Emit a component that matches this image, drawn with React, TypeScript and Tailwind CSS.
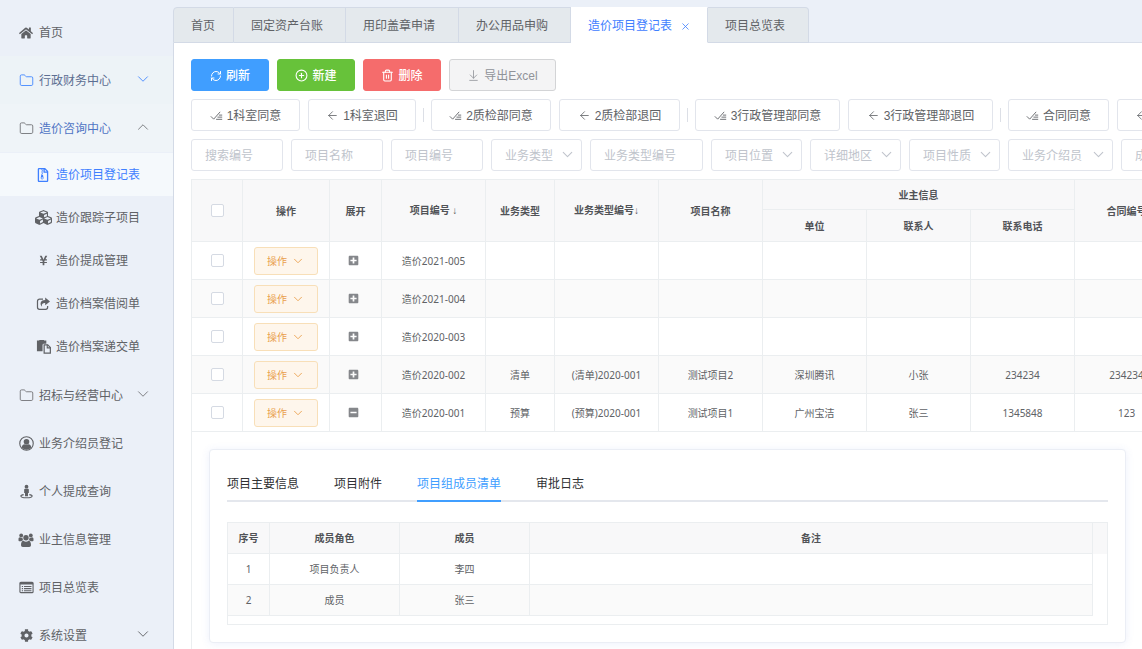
import { useState } from "react";
import type { ReactNode } from "react";
import clsx from "clsx";
import {
  ArrowDownToLine,
  ArrowLeft,
  ChevronDown,
  ChevronUp,
  CirclePlus,
  Folder,
  RefreshCw,
  Trash2,
  X,
} from "lucide-react";
import {
  FaCog,
  FaCubes,
  FaHome,
  FaMinusSquare,
  FaPlusSquare,
  FaRegFileArchive,
  FaYenSign,
} from "react-icons/fa";

const folderIcon = <Folder className="size-[15px]" strokeWidth={1.5} />;

function ShareIcon() {
  return (
    <svg viewBox="0 0 16 16" className="size-[14px]" fill="none">
      <path d="M8 2.500H4A2.300 2.300 0 0 0 1.700 4.800v7A2.300 2.300 0 0 0 4 14.100h7a2.300 2.300 0 0 0 2.300-2.300v-1.500" stroke="currentColor" strokeWidth="1.400" />
      <path d="M10.500 0.500l5.500 4.500-5.500 4.500V6.800C7.500 6.800 6 8 7 11.200 3.500 7.500 5.500 3.300 10.500 3.300z" fill="currentColor" />
    </svg>
  );
}

function PasteIcon() {
  return (
    <svg viewBox="0 0 16 16" className="size-[15px]" fill="currentColor">
      <path d="M1 1.500h2.500V1h5v.5H11V5H8.500A1.500 1.500 0 0 0 7 6.500V13H1z" />
      <path d="M8.700 6.200h3.800l2.800 2.800v6H8.700z" fill="none" stroke="currentColor" strokeWidth="1.300" />
      <path d="M12 6v3.500h3.500" fill="none" stroke="currentColor" strokeWidth="1.200" />
    </svg>
  );
}

function UserCircleIcon() {
  return (
    <svg viewBox="0 0 16 16" className="size-[15px]" fill="currentColor">
      <circle cx="8" cy="8" r="7.200" fill="none" stroke="currentColor" strokeWidth="1.200" />
      <circle cx="8" cy="6.200" r="3" />
      <path d="M2.800 12.300C3.300 10 4.500 8.800 5.900 8.800a3.300 3.300 0 0 0 4.200 0c1.400 0 2.600 1.200 3.100 3.500A6.600 6.600 0 0 1 8 14.600a6.600 6.600 0 0 1-5.200-2.300z" />
    </svg>
  );
}

function StreetViewIcon() {
  return (
    <svg viewBox="0 0 16 16" className="size-[15px]" fill="currentColor">
      <circle cx="8" cy="2.800" r="2" />
      <path d="M6.500 5h3a1 1 0 0 1 1 1v3.500h-.9V13H6.400V9.500h-.9V6a1 1 0 0 1 1-1z" />
      <path d="M5 11.300c-2 .3-3 .8-3 1.500 0 1 2.500 1.900 6 1.900s6-.9 6-1.900c0-.7-1-1.200-3-1.500" fill="none" stroke="currentColor" strokeWidth="1.200" />
    </svg>
  );
}

function UsersIcon() {
  return (
    <svg viewBox="0 0 16 16" className="size-4" fill="currentColor">
      <circle cx="3.200" cy="3.400" r="1.900" />
      <circle cx="12.800" cy="3.400" r="1.900" />
      <circle cx="8" cy="5.800" r="2.700" />
      <path d="M0.500 8.600V7.200c0-1.200.6-1.900 1.500-1.900.8.500 1.600.5 2.500.1 0 1.200.2 2 .9 2.900-.9 0-1.600.3-2.100.9H1.300a.8.8 0 0 1-.8-.6zM15.500 8.600V7.200c0-1.200-.6-1.900-1.500-1.900-.8.500-1.600.5-2.500.1 0 1.200-.2 2-.9 2.900.9 0 1.600.3 2.100.9h2a.8.8 0 0 0 .8-.6z" />
      <path d="M3 13c0-2.600.8-4.200 2.500-4.200a3.900 3.900 0 0 0 5 0C12.200 8.800 13 10.400 13 13c0 1.200-.7 1.900-1.800 1.900H4.800C3.700 14.900 3 14.200 3 13z" />
    </svg>
  );
}

function ListIcon() {
  return (
    <svg viewBox="0 0 16 16" className="size-[15px]" fill="currentColor">
      <rect x="1" y="2.500" width="14" height="11" rx="1" fill="none" stroke="currentColor" strokeWidth="1.200" />
      <path d="M1 2.500h14v2.300H1zM3 6.300h1.300v1.200H3zM3 8.600h1.300v1.200H3zM3 10.900h1.300v1.200H3zM5.300 6.300h8v1.200h-8zM5.300 8.600h8v1.200h-8zM5.300 10.900h8v1.200h-8z" />
    </svg>
  );
}

function FinishedIcon() {
  return (
    <svg viewBox="0 0 16 16" className="size-[13px]" fill="none" stroke="currentColor" strokeWidth="1.100">
      <path d="M1 9l3.500 3.500L12.500 3.500M11 7.500h4M9.200 10h5.800M7.500 12.700H15" />
    </svg>
  );
}

type NavItem = {
  label: string;
  icon: ReactNode;
  arrow?: "up" | "down";
  className?: string;
  iconClass?: string;
};

const topItems: NavItem[] = [
  { label: "首页", icon: <FaHome className="size-[14px]" /> },
  {
    label: "行政财务中心",
    icon: folderIcon,
    arrow: "down",
    className: "bg-[#edf3f7] text-[#5c6e92]",
    iconClass: "text-[#4a8cff]",
  },
  {
    label: "造价咨询中心",
    icon: folderIcon,
    arrow: "up",
    className: "bg-[#eff4f8] text-[#4f75c4]",
    iconClass: "text-[#77797d]",
  },
];

const subItems: NavItem[] = [
  { label: "造价项目登记表", icon: <FaRegFileArchive className="size-[14px]" /> },
  { label: "造价跟踪子项目", icon: <FaCubes className="size-[17px]" /> },
  { label: "造价提成管理", icon: <FaYenSign className="size-[11px]" /> },
  { label: "造价档案借阅单", icon: <ShareIcon /> },
  { label: "造价档案递交单", icon: <PasteIcon /> },
];

const bottomItems: NavItem[] = [
  { label: "招标与经营中心", icon: folderIcon, arrow: "down", iconClass: "text-[#77797d]" },
  { label: "业务介绍员登记", icon: <UserCircleIcon /> },
  { label: "个人提成查询", icon: <StreetViewIcon /> },
  { label: "业主信息管理", icon: <UsersIcon /> },
  { label: "项目总览表", icon: <ListIcon /> },
  { label: "系统设置", icon: <FaCog className="size-[13px]" />, arrow: "down" },
];

function NavRow({ item }: { item: NavItem }) {
  const Arrow = item.arrow === "up" ? ChevronUp : ChevronDown;
  return (
    <a
      href="#"
      className={clsx("flex h-12 items-center gap-1.5 pl-[19px] pr-[21px] pt-px", item.className)}
    >
      <span className={clsx("flex w-[14px] shrink-0 justify-center", item.iconClass)}>
        <span className="shrink-0">{item.icon}</span>
      </span>
      <span className="flex-1">{item.label}</span>
      {item.arrow && (
        <Arrow className={clsx("mb-1 size-[18px]", item.iconClass)} strokeWidth={1.25} />
      )}
    </a>
  );
}

function Sidebar() {
  return (
    <nav className="w-[173px] shrink-0 overflow-hidden pt-2">
      {topItems.map((item) => (
        <NavRow key={item.label} item={item} />
      ))}
      <div className="pb-[3px] pt-px">
        {subItems.map((item, i) => (
          <a
            key={item.label}
            href="#"
            className={clsx(
              "flex h-[43px] items-center gap-1.5 pl-9",
              i === 0 && "bg-[#f5f9fc] text-[#3f80ff]"
            )}
          >
            <span className="flex w-[14px] shrink-0 justify-center">
              <span className="shrink-0">{item.icon}</span>
            </span>
            {item.label}
          </a>
        ))}
      </div>
      {bottomItems.map((item) => (
        <NavRow key={item.label} item={item} />
      ))}
    </nav>
  );
}

const pageTabs = [
  { label: "首页", width: "w-[61px]" },
  { label: "固定资产台账", width: "w-[112px]" },
  { label: "用印盖章申请", width: "w-[113px]" },
  { label: "办公用品申购", width: "w-[112px]" },
  { label: "造价项目登记表", width: "w-[137px]", active: true },
  { label: "项目总览表", width: "w-[101px]" },
];

function PageTabs() {
  return (
    <div className="flex pt-[7px]">
      {pageTabs.map((tab, i) => (
        <button
          key={tab.label}
          className={clsx(
            "flex h-9 shrink-0 items-center gap-2 border-y border-r border-x-[#d3dae6] pl-[17px] pt-px",
            tab.width,
            tab.active
              ? "border-y-white bg-white text-[#3f80ff]"
              : "border-y-[#d3dae6] bg-[#e4e9ed] text-[#606266]",
            i === 0 && "rounded-tl border-l",
            i === pageTabs.length - 1 && "rounded-tr"
          )}
        >
          {tab.label}
          {tab.active && <X className="mt-0.5 size-[11px]" strokeWidth={1.75} />}
        </button>
      ))}
      <div className="flex-1 border-b border-[#d9dfea]" />
    </div>
  );
}

const approvalGroups = [
  [
    { label: "1科室同意", width: "w-[109px]" },
    { label: "1科室退回", width: "w-[108px]", back: true },
  ],
  [
    { label: "2质检部同意", width: "w-[120px]" },
    { label: "2质检部退回", width: "w-[121px]", back: true },
  ],
  [
    { label: "3行政管理部同意", width: "w-[145px]" },
    { label: "3行政管理部退回", width: "w-[145px]", back: true },
  ],
  [
    { label: "合同同意", width: "w-[101px]" },
    { label: "合同退回", width: "w-[101px]", back: true },
  ],
];

function Toolbar() {
  const base = "flex h-8 shrink-0 items-center justify-center gap-1 rounded-[3px] border pt-px";
  return (
    <>
      <div className="flex gap-2">
        <button className={clsx(base, "w-[78px] border-[#409eff] bg-[#409eff] font-medium text-white")}>
          <RefreshCw className="size-3" strokeWidth={2} />
          刷新
        </button>
        <button className={clsx(base, "w-[78px] border-[#67c23a] bg-[#67c23a] font-medium text-white")}>
          <CirclePlus className="size-[13px]" strokeWidth={2} />
          新建
        </button>
        <button className={clsx(base, "w-[78px] border-[#f56c6c] bg-[#f56c6c] font-medium text-white")}>
          <Trash2 className="size-[13px]" strokeWidth={2} />
          删除
        </button>
        <button className={clsx(base, "w-[107px] border-[#d3d4d6] bg-[#f4f4f5] text-[#909399]")}>
          <ArrowDownToLine className="size-[13px]" strokeWidth={1.5} />
          导出Excel
        </button>
      </div>
      <div className="flex items-center gap-[7px]">
        {approvalGroups.map((group, i) => (
          <div key={i} className="flex shrink-0 items-center gap-[7px]">
            {i > 0 && <span className="h-3.5 w-px bg-[#dcdfe6]" />}
            <div className="flex gap-2">
              {group.map((b) => (
                <button key={b.label} className={clsx(base, "border-[#e2e5ec] bg-white", b.width)}>
                  {b.back ? <ArrowLeft className="size-[13px]" strokeWidth={1.5} /> : <FinishedIcon />}
                  {b.label}
                </button>
              ))}
            </div>
          </div>
        ))}
      </div>
    </>
  );
}

const filters = [
  { label: "搜索编号", width: "w-[92px]" },
  { label: "项目名称", width: "w-[92px]" },
  { label: "项目编号", width: "w-[92px]" },
  { label: "业务类型", width: "w-[91px]", select: true },
  { label: "业务类型编号", width: "w-[113px]" },
  { label: "项目位置", width: "w-[91px]", select: true },
  { label: "详细地区", width: "w-[91px]", select: true },
  { label: "项目性质", width: "w-[91px]", select: true },
  { label: "业务介绍员", width: "w-[105px]", select: true },
  { label: "成员", width: "w-[91px]", select: true },
];

function Filters() {
  const field =
    "h-8 w-full appearance-none rounded-[3px] border border-[#e2e5ec] bg-white px-[13px] pt-px text-[#c0c4cc] outline-none placeholder:text-[#c0c4cc]";
  return (
    <div className="flex gap-2">
      {filters.map((f) => (
        <div key={f.label} className={clsx("relative shrink-0", f.width)}>
          {f.select ? (
            <>
              <select aria-label={f.label} className={field}>
                <option>{f.label}</option>
              </select>
              <ChevronDown
                className="pointer-events-none absolute right-1.5 top-[7px] size-[17px] text-[#c0c4cc]"
                strokeWidth={1.5}
              />
            </>
          ) : (
            <input type="text" aria-label={f.label} placeholder={f.label} className={field} />
          )}
        </div>
      ))}
    </div>
  );
}

const rows = [
  { code: "造价2021-005" },
  { code: "造价2021-004" },
  { code: "造价2020-003" },
  {
    code: "造价2020-002",
    type: "清单",
    typeCode: "(清单)2020-001",
    name: "测试项目2",
    company: "深圳腾讯",
    contact: "小张",
    phone: "234234",
    contract: "234234",
  },
  {
    code: "造价2020-001",
    type: "预算",
    typeCode: "(预算)2020-001",
    name: "测试项目1",
    company: "广州宝洁",
    contact: "张三",
    phone: "1345848",
    contract: "123",
    expanded: true,
  },
];

const cell = "border-b border-r border-[#ebeef0]";
const checkbox = "block size-[13px] mx-auto appearance-none rounded-[2px] border border-[#d5dae3] bg-white";
const sortArrow = <span className="font-['Liberation_Sans',sans-serif] font-normal">↓</span>;

function ProjectTable() {
  return (
    <table className="w-[987px] table-fixed border-separate border-spacing-0 border-t border-[#ebeef0] text-center">
      <colgroup>
        <col className="w-[51px]" />
        <col className="w-[87px]" />
        <col className="w-[52px]" />
        <col className="w-[104px]" />
        <col className="w-[69px]" />
        <col className="w-[104px]" />
        <col className="w-[104px]" />
        <col className="w-[104px]" />
        <col className="w-[104px]" />
        <col className="w-[104px]" />
        <col className="w-[104px]" />
      </colgroup>
      <thead className="bg-[#f8f8f9] text-[#515357]">
        <tr className="h-[30px]">
          <th rowSpan={2} className={cell}>
            <input type="checkbox" aria-label="全选" className={checkbox} />
          </th>
          <th rowSpan={2} className={cell}>操作</th>
          <th rowSpan={2} className={cell}>展开</th>
          <th rowSpan={2} className={cell}>项目编号 {sortArrow}</th>
          <th rowSpan={2} className={cell}>业务类型</th>
          <th rowSpan={2} className={cell}>业务类型编号{sortArrow}</th>
          <th rowSpan={2} className={cell}>项目名称</th>
          <th colSpan={3} className={cell}>业主信息</th>
          <th rowSpan={2} className={cell}>合同编号</th>
        </tr>
        <tr className="h-8">
          <th className={cell}>单位</th>
          <th className={cell}>联系人</th>
          <th className={cell}>联系电话</th>
        </tr>
      </thead>
      <tbody>
        {rows.map((row) => (
          <tr key={row.code} className="h-[38px] even:bg-[#fafafa]">
            <td className={cell}>
              <input type="checkbox" aria-label={row.code} className={checkbox} />
            </td>
            <td className={cell}>
              <button className="mx-auto flex h-7 w-16 items-center justify-center gap-1 rounded-[3px] border border-[#f8dfb8] bg-[#fef6ec] text-[#e99f4c]">
                操作
                <ChevronDown className="size-[14px]" strokeWidth={1.5} />
              </button>
            </td>
            <td className={clsx(cell, "pr-1")}>
              <button aria-label="展开" className="mx-auto block text-[#85878b]">
                {row.expanded ? (
                  <FaMinusSquare className="size-[11px]" />
                ) : (
                  <FaPlusSquare className="size-[11px]" />
                )}
              </button>
            </td>
            <td className={cell}>{row.code}</td>
            <td className={cell}>{row.type}</td>
            <td className={cell}>{row.typeCode}</td>
            <td className={cell}>{row.name}</td>
            <td className={cell}>{row.company}</td>
            <td className={cell}>{row.contact}</td>
            <td className={cell}>{row.phone}</td>
            <td className={cell}>{row.contract}</td>
          </tr>
        ))}
      </tbody>
    </table>
  );
}

const detailTabs = ["项目主要信息", "项目附件", "项目组成员清单", "审批日志"];

const members = [
  { role: "项目负责人", name: "李四" },
  { role: "成员", name: "张三" },
];

function DetailCard() {
  const [active, setActive] = useState("项目组成员清单");

  return (
    <div className="rounded border border-[#ebeef5] bg-white p-[17px] shadow-[0_1px_8px_rgba(80,110,220,0.10)]">
      <div className="flex gap-[35px] text-[12px] text-[#303133] shadow-[inset_0_-2px_0_#e4e7ed]">
        {detailTabs.map((tab) => (
          <button
            key={tab}
            onClick={() => setActive(tab)}
            className={clsx(
              "h-[35px] border-b-2 pt-px",
              tab === active ? "border-[#409eff] text-[#409eff]" : "border-transparent"
            )}
          >
            {tab}
          </button>
        ))}
      </div>

      <div className="mt-5 border border-[#ebeef0] pb-2">
        <table className="w-full table-fixed border-separate border-spacing-0 text-center">
          <colgroup>
            <col className="w-[42px]" />
            <col className="w-[130px]" />
            <col className="w-[130px]" />
            <col />
            <col className="w-[14px]" />
          </colgroup>
          <thead className="bg-[#f8f8f9] text-[#515357]">
            <tr className="h-[31px]">
              <th className={cell}>序号</th>
              <th className={cell}>成员角色</th>
              <th className={cell}>成员</th>
              <th className={cell}>备注</th>
              <td />
            </tr>
          </thead>
          <tbody>
            {members.map((m, i) => {
              const td = clsx(cell, i % 2 === 1 && "bg-[#fafafa]");
              return (
                <tr key={m.name} className="h-[31px]">
                  <td className={td}>{i + 1}</td>
                  <td className={td}>{m.role}</td>
                  <td className={td}>{m.name}</td>
                  <td className={td} />
                  <td />
                </tr>
              );
            })}
          </tbody>
        </table>
      </div>
    </div>
  );
}

export default function App() {
  return (
    <div className="flex h-screen overflow-hidden bg-[#ebf0f8] font-['Liberation_Sans','Noto_Sans_CJK_SC',sans-serif] text-[12px] leading-4 text-[#606266]">
      <Sidebar />
      <main className="flex min-w-0 flex-1 flex-col overflow-hidden">
        <div className="flex flex-1 flex-col">
          <PageTabs />
          <div className="flex flex-1 flex-col gap-2 border-l border-[#d3dae6] bg-white pl-[17px] pt-4">
            <Toolbar />
            <Filters />
            <div className="flex-1 border-l border-[#ebeef0] font-['Noto_Sans','Noto_Sans_CJK_SC',sans-serif] text-[10px]">
              <ProjectTable />
              <div className="py-[17px] pl-[17px] pr-4">
                <DetailCard />
              </div>
            </div>
          </div>
        </div>
      </main>
    </div>
  );
}
